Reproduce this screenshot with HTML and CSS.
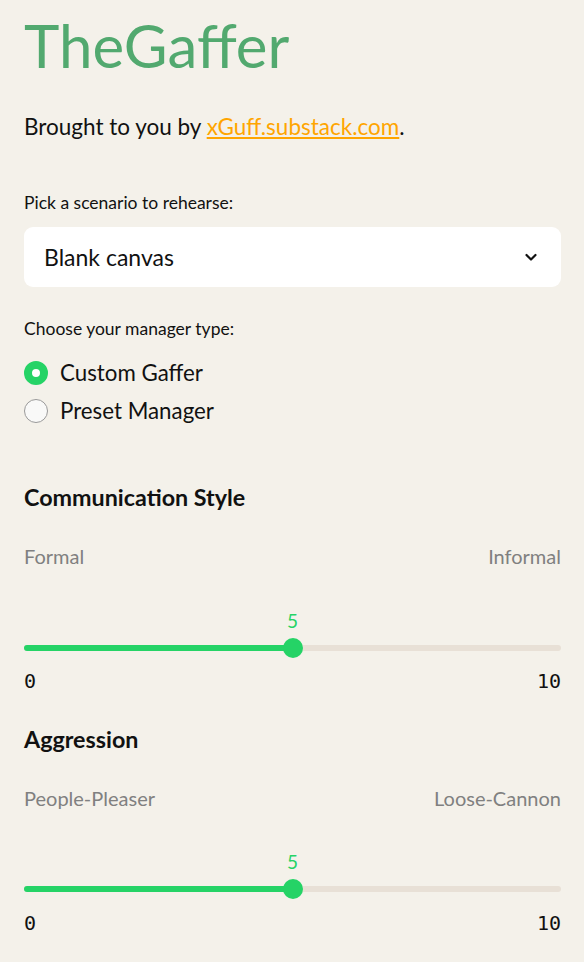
FILE: index.html
```html
<!DOCTYPE html>
<html lang="en">
  <head>
    <meta charset="UTF-8" />
    <title>TheGaffer</title>
    <link rel="stylesheet" href="styles.css">
  </head>
  <body>
    <div class="page">
      <h1>TheGaffer</h1>

      <p class="intro">Brought to you by <a href="#">xGuff.substack.com</a>.</p>

      <div class="field">
        <label class="label">Pick a scenario to rehearse:</label>
        <div class="select">
          <span>Blank canvas</span>
          <svg width="16" height="16" viewBox="0 0 16 16">
            <path d="M3.5 6 L8 10.5 L12.5 6" fill="none" stroke="#111" stroke-width="2.2" stroke-linecap="round" stroke-linejoin="round"/>
          </svg>
        </div>
      </div>

      <div class="field radio-field">
        <label class="label">Choose your manager type:</label>
        <div class="radios">
          <div class="radio checked"><span class="dot"></span>Custom Gaffer</div>
          <div class="radio"><span class="dot"></span>Preset Manager</div>
        </div>
      </div>

      <div class="slider-block first">
        <h3>Communication Style</h3>
        <div class="ends"><span>Formal</span><span>Informal</span></div>
        <div class="slider">
          <div class="track">
            <div class="fill" style="width: 50%"></div>
            <div class="thumb" style="left: 50%"><span class="value">5</span></div>
          </div>
          <div class="minmax"><span>0</span><span>10</span></div>
        </div>
      </div>

      <div class="slider-block">
        <h3>Aggression</h3>
        <div class="ends"><span>People-Pleaser</span><span>Loose-Cannon</span></div>
        <div class="slider">
          <div class="track">
            <div class="fill" style="width: 50%"></div>
            <div class="thumb" style="left: 50%"><span class="value">5</span></div>
          </div>
          <div class="minmax"><span>0</span><span>10</span></div>
        </div>
      </div>
    </div>
  </body>
</html>
```

FILE: styles.css
```css
body {
    margin: 0;
    background: #f4f1ea;
    color: #111;
    font-family: 'Lato', 'Noto Sans', sans-serif;
}

.page {
    width: 537px;
    padding: 9px 23px 0 24px;
}

h1 {
    margin: 0;
    font-size: 60px;
    font-weight: 400;
    line-height: 72px;
    color: #52a96f;
}

.intro {
    margin: 31px 0 0;
    font-size: 22.5px;
    line-height: 30px;
}

.intro a {
    color: #ffa500;
}

.field {
    margin-top: 49px;
}

.radio-field {
    margin-top: 30px;
}

.label {
    display: block;
    font-size: 17.5px;
    line-height: 24px;
}

.select {
    margin-top: 12px;
    height: 60px;
    background: #fff;
    border-radius: 9px;
    display: flex;
    align-items: center;
    justify-content: space-between;
    padding: 0 22px 0 20px;
    font-size: 23px;
}

.radios {
    margin-top: 17px;
    display: flex;
    flex-direction: column;
    gap: 8px;
}

.radio {
    display: flex;
    align-items: center;
    gap: 12px;
    font-size: 22.3px;
    line-height: 30px;
}

.dot {
    width: 24px;
    height: 24px;
    border-radius: 50%;
    border: 1px solid #999;
    background: #f9f9f8;
    box-sizing: border-box;
}

.radio.checked .dot {
    border: 8px solid #25d366;
    background: #fff;
}

.slider-block h3 {
    margin: 0;
    font-size: 23.3px;
    font-weight: 700;
    line-height: 30px;
}

.slider-block.first {
    margin-top: 56px;
}

.slider-block + .slider-block {
    margin-top: 30.5px;
}

.ends {
    margin-top: 32px;
    display: flex;
    justify-content: space-between;
    color: #808080;
    font-size: 20px;
    line-height: 24px;
}

.slider {
    margin-top: 76.5px;
}

.track {
    position: relative;
    height: 6px;
    border-radius: 3px;
    background: #e8e0d6;
}

.fill {
    height: 100%;
    border-radius: 3px;
    background: #25d366;
}

.thumb {
    position: absolute;
    top: 50%;
    width: 20px;
    height: 20px;
    margin: -10px 0 0 -10px;
    border-radius: 50%;
    background: #25d366;
}

.value {
    position: absolute;
    bottom: 27px;
    left: 50%;
    transform: translateX(-50%);
    color: #25d366;
    font-size: 19px;
    line-height: 20px;
}

.minmax {
    margin-top: 18.5px;
    display: flex;
    justify-content: space-between;
    font-family: 'DejaVu Sans Mono', monospace;
    font-size: 20px;
    line-height: 24px;
}
```
